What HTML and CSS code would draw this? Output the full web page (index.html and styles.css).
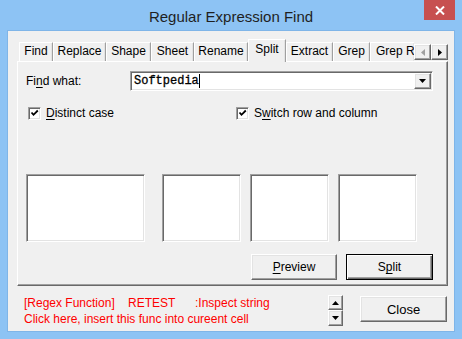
FILE: index.html
```html
<!DOCTYPE html>
<html lang="en">
<head>
    <meta charset="UTF-8">
    <title>Regular Expression Find</title>
    <link rel="stylesheet" href="styles.css">
</head>
<body>
    <div class="window">
        <header class="titlebar">
            <span></span>
            <span class="title">Regular Expression Find</span>
            <button class="close-x" title="Close">
                <svg width="10" height="9" viewBox="0 0 10 9"><path d="M1 0.5 L9 8.5 M9 0.5 L1 8.5" stroke="#fff" stroke-width="2"/></svg>
            </button>
        </header>

        <div class="client">
            <div class="tab-row">
                <div class="tab-strip">
                    <div class="tab">Find</div>
                    <div class="tab">Replace</div>
                    <div class="tab">Shape</div>
                    <div class="tab">Sheet</div>
                    <div class="tab">Rename</div>
                    <div class="tab active">Split</div>
                    <div class="tab">Extract</div>
                    <div class="tab">Grep</div>
                    <div class="tab clipped">Grep R</div>
                </div>
                <div class="tab-scroll">
                    <button class="btn3d arrow-btn">
                        <svg width="4" height="7" viewBox="0 0 4 7"><polygon points="4,0 4,7 0,3.5" fill="#a0a0a0"/></svg>
                    </button>
                    <button class="btn3d arrow-btn">
                        <svg width="4" height="7" viewBox="0 0 4 7"><polygon points="0,0 0,7 4,3.5" fill="#000"/></svg>
                    </button>
                </div>
            </div>

            <section class="panel">
                <div class="find-row">
                    <label class="find-label">Fi<u>n</u>d what:</label>
                    <div class="combo sunken">
                        <span class="combo-text">Softpedia</span><span class="caret"></span>
                        <button class="btn3d combo-btn">
                            <svg width="7" height="4" viewBox="0 0 7 4"><polygon points="0,0 7,0 3.5,4" fill="#000"/></svg>
                        </button>
                    </div>
                </div>

                <div class="check-row">
                    <label class="check">
                        <span class="check-box">
                            <svg width="9" height="9" viewBox="0 0 9 9"><polyline points="1.5,3.5 3.5,5.8 7.8,1.5" fill="none" stroke="#000" stroke-width="1.8"/></svg>
                        </span>
                        <span><u>D</u>istinct case</span>
                    </label>
                    <label class="check">
                        <span class="check-box">
                            <svg width="9" height="9" viewBox="0 0 9 9"><polyline points="1.5,3.5 3.5,5.8 7.8,1.5" fill="none" stroke="#000" stroke-width="1.8"/></svg>
                        </span>
                        <span>S<u>w</u>itch row and column</span>
                    </label>
                </div>

                <div class="box-row">
                    <div class="sunken box wide"></div>
                    <div class="sunken box gap-big"></div>
                    <div class="sunken box"></div>
                    <div class="sunken box"></div>
                </div>

                <div class="button-row">
                    <button class="btn3d push"><span><u>P</u>review</span></button>
                    <button class="btn3d push default"><span>S<u>p</u>lit</span></button>
                </div>
            </section>

            <footer class="footer">
                <div class="func-info">
                    <div><span class="col-a">[Regex Function]</span><span class="col-b">RETEST</span>:Inspect string</div>
                    <div>Click here, insert this func into cureent cell</div>
                </div>
                <div class="spin">
                    <button class="btn3d spin-btn">
                        <svg width="7" height="4" viewBox="0 0 7 4"><polygon points="0,4 7,4 3.5,0" fill="#000"/></svg>
                    </button>
                    <button class="btn3d spin-btn">
                        <svg width="7" height="4" viewBox="0 0 7 4"><polygon points="0,0 7,0 3.5,4" fill="#000"/></svg>
                    </button>
                </div>
                <button class="btn3d push close-btn">Close</button>
            </footer>
        </div>
    </div>
</body>
</html>
```

FILE: styles.css
```css
* {
    margin: 0;
    padding: 0;
    box-sizing: border-box;
}

body {
    font-family: 'Liberation Sans', Arial, sans-serif;
    font-size: 12px;
    color: #000;
    background: #8dc3f4;
}

button {
    font: inherit;
    color: inherit;
}

u {
    text-decoration-thickness: 1px;
    text-underline-offset: 2px;
}

.window {
    width: 462px;
    height: 339px;
    background: #8dc3f4;
    padding: 0 8px 8px;
}

/* title bar */
.titlebar {
    height: 31px;
    display: grid;
    grid-template-columns: 1fr auto 1fr;
    align-items: start;
    margin: 0 -8px;
}

.title {
    font-size: 15px;
    color: #1f1f1f;
    line-height: 31px;
    padding-top: 1px;
}

.close-x {
    justify-self: end;
    margin-right: 7px;
    width: 31px;
    height: 20px;
    border: none;
    background: #c75050;
    display: flex;
    align-items: center;
    justify-content: center;
}

/* dialog body */
.client {
    height: 300px;
    background: #f0f0f0;
    padding: 8px 6px 0 9px;
    box-shadow: 0 0 0 1px #7fb5e8;
}

.btn3d {
    background: #f0f0f0;
    border: 1px solid;
    border-color: #fff #696969 #696969 #fff;
    box-shadow: inset -1px -1px #a0a0a0, inset 1px 1px #e3e3e3;
    display: flex;
    align-items: center;
    justify-content: center;
}

.sunken {
    background: #fff;
    border: 1px solid;
    border-color: #a0a0a0 #fff #fff #a0a0a0;
    box-shadow: inset 1px 1px #696969, inset -1px -1px #e3e3e3;
}

/* tabs */
.tab-row {
    display: flex;
    height: 22px;
}

.tab-strip {
    flex: 1;
    margin-left: 2px;
    display: grid;
    grid-template-columns: 34px 53px 45px 43px 54px 38px 47px 37px 1fr;
    align-items: end;
    height: 22px;
}

.tab {
    height: 19px;
    line-height: 17px;
    text-align: center;
    white-space: nowrap;
    overflow: hidden;
    border: 1px solid;
    border-bottom: none;
    border-color: #fff #a0a0a0 #fff #fff;
    box-shadow: inset -1px 0 #e3e3e3;
    background: #f0f0f0;
}

.tab.active {
    height: 23px;
    margin-bottom: -1px;
    line-height: 18px;
    position: relative;
    z-index: 1;
}

.tab.clipped {
    text-align: left;
    padding-left: 5px;
    border-right: none;
}

.tab-scroll {
    display: flex;
    margin-top: 5px;
}

.arrow-btn {
    width: 17px;
    height: 16px;
}

.panel {
    height: 225px;
    width: 431px;
    border: 1px solid;
    border-color: #fff #696969 #696969 #fff;
    box-shadow: inset -1px -1px #a0a0a0;
    padding: 9px 14px 0 8px;
}

.find-row {
    display: flex;
    align-items: center;
    height: 20px;
}

.find-label {
    flex: 0 0 104px;
}

.combo {
    width: 311px;
    height: 20px;
    display: flex;
    align-items: center;
    padding-left: 3px;
}

.combo-text {
    font-family: 'Liberation Mono', 'Courier New', monospace;
    font-size: 12px;
    color: #000;
    -webkit-text-stroke: 0.3px #000;
}

.caret {
    width: 1px;
    height: 14px;
    background: #000;
}

.combo-btn {
    margin-left: auto;
    margin-right: 1px;
    width: 17px;
    height: 16px;
}

.check-row {
    display: grid;
    grid-template-columns: 208px auto;
    margin-top: 16px;
    padding-left: 2px;
    height: 13px;
}

.check {
    display: flex;
    align-items: center;
    gap: 5px;
    line-height: 13px;
}

.check-box {
    width: 13px;
    height: 13px;
    background: #fff;
    border: 1px solid;
    border-color: #a0a0a0 #fff #fff #a0a0a0;
    box-shadow: inset 1px 1px #696969, inset -1px -1px #e3e3e3;
    display: flex;
    align-items: center;
    justify-content: center;
}

.box-row {
    display: flex;
    margin-top: 54px;
    height: 68px;
}

.box {
    width: 79px;
    margin-left: 9px;
}

.box.wide {
    width: 119px;
    margin-left: 0;
}

.box.gap-big {
    margin-left: 17px;
}

.button-row {
    display: flex;
    justify-content: flex-end;
    gap: 9px;
    margin-top: 12px;
}

.push {
    height: 26px;
    width: 86px;
}

.push.default {
    width: 87px;
    border-color: #000;
    box-shadow: inset 1px 1px #fff, inset -1px -1px #696969, inset -2px -2px #a0a0a0;
}

/* bottom strip */
.footer {
    display: flex;
    align-items: flex-start;
    padding: 9px 0 0 7px;
}

.func-info {
    flex: 0 0 304px;
    color: #ff0000;
    line-height: 16px;
}

.col-a {
    display: inline-block;
    width: 104px;
}

.col-b {
    display: inline-block;
    width: 67px;
}

.spin {
    display: flex;
    flex-direction: column;
    width: 15px;
}

.spin-btn {
    width: 15px;
    height: 15px;
}

.spin-btn + .spin-btn {
    height: 16px;
}

.close-btn {
    width: 87px;
    margin: 1px 0 0 17px;
    font-size: 13px;
}
```
